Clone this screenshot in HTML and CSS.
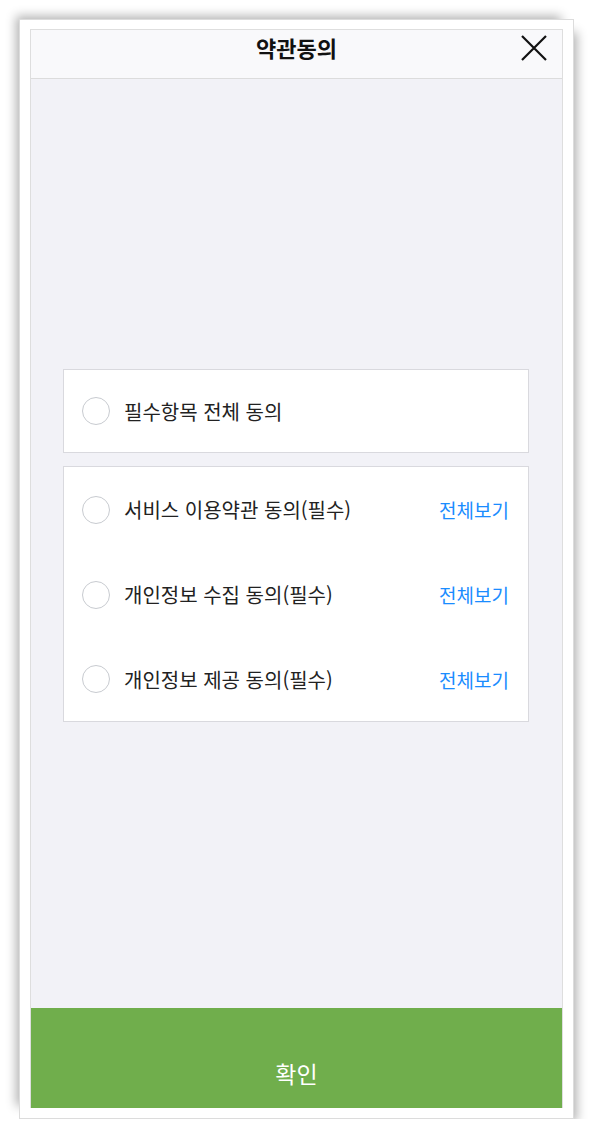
FILE: index.html
```html
<!DOCTYPE html>
<html lang="ko">
  <head>
    <meta charset="UTF-8" />
    <meta name="viewport" content="width=device-width, initial-scale=1.0" />
    <title>약관동의</title>
    <link rel="stylesheet" href="styles.css">
  </head>
  <body>
    <div class="frame">
      <div class="screen">
        <header class="top-bar">
          <h1>약관동의</h1>
          <button type="button" class="close-btn" aria-label="닫기">
            <svg width="26" height="26" viewBox="0 0 26 26">
              <path d="M1 1 L25 25 M25 1 L1 25" stroke="#111" stroke-width="2.2" fill="none" />
            </svg>
          </button>
        </header>

        <main class="terms">
          <div class="card">
            <label class="row">
              <span class="radio"></span>
              <span class="label">필수항목 전체 동의</span>
            </label>
          </div>

          <div class="card">
            <div class="row">
              <span class="radio"></span>
              <span class="label">서비스 이용약관 동의(필수)</span>
              <a class="more" href="#">전체보기</a>
            </div>
            <div class="row">
              <span class="radio"></span>
              <span class="label">개인정보 수집 동의(필수)</span>
              <a class="more" href="#">전체보기</a>
            </div>
            <div class="row">
              <span class="radio"></span>
              <span class="label">개인정보 제공 동의(필수)</span>
              <a class="more" href="#">전체보기</a>
            </div>
          </div>
        </main>

        <button type="button" class="confirm-btn">확인</button>
      </div>
    </div>
  </body>
</html>
```

FILE: styles.css
```css
body {
  margin: 0;
  background-color: #ffffff;
  font-family: "Noto Sans CJK KR", "Noto Sans", sans-serif;
  color: #222;
}

.frame {
  margin: 19px 0 0 19px;
  width: 533px;
  height: 1079px;
  padding: 9px 10px 10px 10px;
  border: 1px solid #dcdcdc;
  background: white;
  box-shadow: -8px -8px 10px -5px rgba(0, 0, 0, 0.3), 8px 8px 10px -5px rgba(0, 0, 0, 0.3);
}

.screen {
  display: flex;
  flex-direction: column;
  height: 100%;
  border: 1px solid #dedede;
  border-bottom: none;
  box-sizing: border-box;
  background-color: #f2f2f7;
}

.top-bar {
  position: relative;
  height: 48px;
  display: flex;
  align-items: center;
  justify-content: center;
  background-color: #f9f9fb;
  border-bottom: 1px solid #dcdcdc;
}

.top-bar h1 {
  margin: 0;
  font-size: 22px;
  font-weight: bold;
  color: #111;
  padding-bottom: 14px;
}

.close-btn {
  position: absolute;
  right: 15px;
  top: 5px;
  padding: 0;
  border: none;
  background: none;
}

.terms {
  flex: 1;
  display: flex;
  flex-direction: column;
  justify-content: center;
  gap: 13px;
  padding: 0 33px 0 32px;
  padding-top: 4px;
}

.card {
  background: white;
  border: 1px solid #d9d9de;
}

.row {
  display: flex;
  align-items: center;
  height: 82px;
  padding: 0 19px 0 18px;
}

.card .row:first-child:not(:last-child) {
  height: 85px;
}

.card .row + .row {
  height: 85px;
}

.card .row:last-child:not(:first-child) {
  height: 84px;
}

.radio {
  width: 26px;
  height: 26px;
  border: 1.5px solid #c8cbd0;
  border-radius: 50%;
  margin-right: 14px;
  flex-shrink: 0;
}

.label {
  flex: 1;
  font-size: 20px;
  color: #222;
}

.more {
  font-size: 19px;
  color: #1a8cff;
  text-decoration: none;
}

.confirm-btn {
  height: 100px;
  border: none;
  background-color: #70ae4c;
  color: white;
  font-family: inherit;
  font-size: 23px;
  padding-top: 30px;
}
```
